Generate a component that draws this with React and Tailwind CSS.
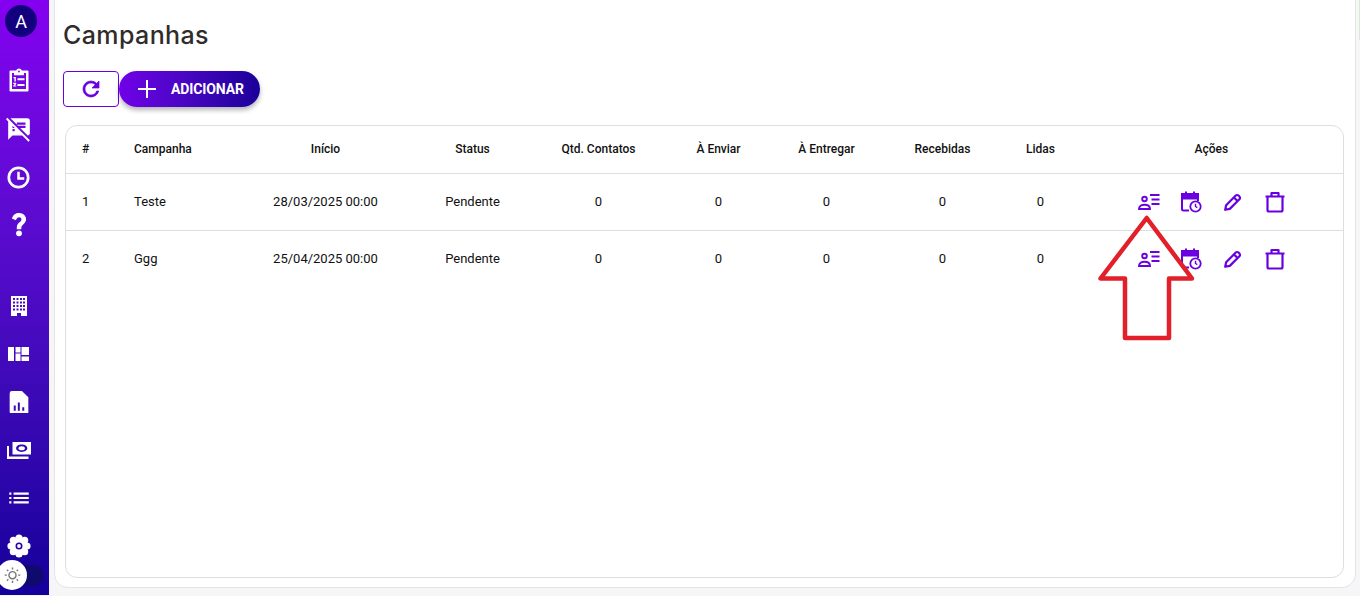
import React from "react";
import { MdSpeakerNotesOff, MdList, MdOutlineWbSunny } from "react-icons/md";

const P = "text-[#6a00e0]";

function ClipNumbered() {
  return (
    <svg viewBox="0 0 24 24" className="w-[24px] h-[24px] -mt-[2px]" fill="currentColor">
      <path fillRule="evenodd" d="M9.200 2.500C9.600 1.300 10.700.5 12 .5s2.400.8 2.800 2H20.500a1 1 0 0 1 1 1V22.500a1 1 0 0 1-1 1H3.500a1 1 0 0 1-1-1V3.500a1 1 0 0 1 1-1h5.700zM5 5v16h14V5h-2v2.200H7V5H5zm7-2.400a.9.9 0 1 0 0 1.800.9.9 0 0 0 0-1.800z" />
      <path d="M6.500 9h2.300v4.500H7.400V10.200H6.500zM10.500 10.200h7v2h-7zM6.300 14.800h2.900v1.200l-1.400 1.400h1.500v1.200H6.300v-1.100l1.500-1.500H6.300zM10.500 16h7v2h-7z" />
    </svg>
  );
}
function Clock() {
  return (
    <svg viewBox="0 0 24 24" className="w-[25px] h-[25px]" fill="none" stroke="currentColor" strokeWidth="2.600">
      <circle cx="12" cy="12" r="9.300" />
      <path d="M12 6.500V13h5.500" strokeWidth="2.400" />
    </svg>
  );
}
function Question() {
  return (
    <svg viewBox="0 0 24 24" className="w-[28px] h-[28px] -mt-[2px]" fill="currentColor" stroke="currentColor" strokeWidth="1">
      <path d="M11.070 12.850c.77-1.390 2.250-2.210 3.110-3.440.91-1.290.4-3.700-2.180-3.700-1.690 0-2.520 1.280-2.870 2.340L6.540 6.960C7.250 4.830 9.180 3 11.990 3c2.350 0 3.960 1.070 4.780 2.410.7 1.150 1.110 3.300.03 4.900-1.200 1.770-2.350 2.310-2.970 3.450-.25.46-.35.76-.35 2.240h-2.890c-.01-.78-.13-2.050.48-3.150zM14 20c0 1.100-.9 2-2 2s-2-.9-2-2 .9-2 2-2 2 .9 2 2z" />
    </svg>
  );
}
function Refresh() {
  return (
    <svg viewBox="0 0 24 24" className="w-[24px] h-[24px]" fill="currentColor" stroke="currentColor" strokeWidth="0.700">
      <path d="M17.650 6.350A7.958 7.958 0 0 0 12 4c-4.420 0-7.990 3.580-7.990 8s3.570 8 7.990 8c3.730 0 6.840-2.550 7.730-6h-2.080A5.990 5.990 0 0 1 12 18c-3.310 0-6-2.690-6-6s2.690-6 6-6c1.660 0 3.140.69 4.220 1.780L13 11h7V4l-2.350 2.350z" />
    </svg>
  );
}
function Building() {
  return (
    <svg viewBox="0 0 16 20" className="w-[16px] h-[20px]" fill="currentColor">
      <path fillRule="evenodd" d="M0 0h16v20H10v-3H6v3H0zM2 2v2h2V2zm3.500 0v2h2V2zm3.500 0v2h2V2zm3 0v2h2V2zM2 5.500v2h2v-2zm3.500 0v2h2v-2zm3.500 0v2h2v-2zm3 0v2h2v-2zM2 9v2h2V9zm3.500 0v2h2V9zm3.500 0v2h2V9zm3 0v2h2V9zM2 12.500v2h2v-2zm3.500 0v2h2v-2zm3.500 0v2h2v-2zm3 0v2h2v-2z" />
    </svg>
  );
}
function Quilt() {
  return (
    <svg viewBox="0 0 21 14" className="w-[21px] h-[14px]" fill="currentColor">
      <path d="M0 0h6v14H0zM7.500 0h5v5.500h-5zM7.500 6.500h5V14h-5zM13.500 0H21v8h-7.500zM13.500 9.500H21V14h-7.500z" />
    </svg>
  );
}
function FileChart() {
  return (
    <svg viewBox="0 0 24 24" className="w-[28px] h-[28px]" fill="currentColor">
      <path fillRule="evenodd" d="M6 2.500h8.500L20 8v13.500H5a1 1 0 0 1-1-1V4.500a2 2 0 0 1 2-2zM7.500 15v4.500h1.700V15zM11 12.500v7h1.700v-7zM14.800 16.500v3h1.700v-3z" />
    </svg>
  );
}
function Money() {
  return (
    <svg viewBox="0 0 24 17" className="w-[24px] h-[17px]" fill="currentColor">
      <path fillRule="evenodd" d="M5.500 0H24v12.500H5.500zM14.700 2.600c-3.100 0-5.600 1.600-5.600 3.650s2.500 3.650 5.600 3.650 5.600-1.600 5.600-3.650-2.500-3.650-5.600-3.650z" />
      <ellipse cx="14.700" cy="6.250" rx="3.200" ry="2" />
      <path d="M0 4h2v10.500h19.500V17H0z" />
    </svg>
  );
}
function Gear() {
  const a = [0, 45, 90, 135, 180, 225, 270, 315];
  return (
    <svg viewBox="0 0 24 24" className="w-[24px] h-[24px]">
      {a.map((d) => (
        <circle key={d} cx={12 + 8 * Math.cos((d * Math.PI) / 180)} cy={12 + 8 * Math.sin((d * Math.PI) / 180)} r="3.600" fill="#fff" />
      ))}
      <circle cx="12" cy="12" r="8" fill="#fff" />
      <circle cx="12" cy="12" r="2.700" fill="none" stroke="#2a00a8" strokeWidth="1.600" />
    </svg>
  );
}
function PersonList() {
  return (
    <svg viewBox="0 0 24 24" className="w-[24px] h-[24px]" fill="none" stroke="currentColor" strokeWidth="1.900">
      <circle cx="7.500" cy="9" r="2.300" />
      <path d="M2 19c0-2.900 2.500-4.300 5.500-4.300S13 16.100 13 19z" />
      <path d="M13 5h9.500M14.500 9.500h8M14.500 14h8" strokeWidth="2.100" />
    </svg>
  );
}
function CalClock() {
  return (
    <svg viewBox="0 0 24 24" className="w-[24px] h-[24px] ml-[1px]" fill="none" stroke="currentColor" strokeWidth="2">
      <path d="M10 20.500H4.500A1.500 1.500 0 0 1 3 19V5.500A1.500 1.500 0 0 1 4.500 4h13A1.500 1.500 0 0 1 19 5.500V11" />
      <path d="M3 4h16v4.500H3z" fill="currentColor" />
      <path d="M7 1.500v3M15 1.500v3" />
      <circle cx="16.500" cy="16.500" r="5.200" strokeWidth="1.800" fill="#fff" />
      <path d="M16.500 13.700v2.800l1.800 1.200" strokeWidth="1.400" />
    </svg>
  );
}
function Pencil() {
  return (
    <svg viewBox="0 0 24 24" className="w-[22px] h-[22px]" fill="none" stroke="currentColor" strokeWidth="2.400" strokeLinejoin="round">
      <path d="M3.500 20.500l1-5L15 5a2.100 2.100 0 0 1 3 0l1 1a2.100 2.100 0 0 1 0 3L8.500 19.500z" />
      <path d="M13 7l4 4" />
    </svg>
  );
}
function Trash() {
  return (
    <svg viewBox="0 0 24 24" className="w-[24px] h-[24px]" fill="none" stroke="currentColor" strokeWidth="2.200" strokeLinejoin="round">
      <path d="M2.500 6.500h19M8.500 6.500V3h7v3.500" />
      <path d="M4.500 6.500V20A1.500 1.500 0 0 0 6 21.500h12a1.500 1.500 0 0 0 1.500-1.500V6.500" />
    </svg>
  );
}

const top = [
  <ClipNumbered />,
  <MdSpeakerNotesOff size={26} />,
  <Clock />,
  <Question />,
];
const bottom = [
  <Building />,
  <Quilt />,
  <FileChart />,
  <Money />,
  <MdList size={26} />,
  <Gear />,
];

const grid = "grid grid-cols-[52.5px_117px_180px_114px_138px_102px_114px_118px_78px_263.5px] items-center";
const head = ["Início", "Status", "Qtd. Contatos", "À Enviar", "À Entregar", "Recebidas", "Lidas", "Ações"];
const rows = [
  ["1", "Teste", "28/03/2025 00:00"],
  ["2", "Ggg", "25/04/2025 00:00"],
];

function NavItem({ children }) {
  return <div className="h-[48px] w-[37px] flex items-center justify-center text-white">{children}</div>;
}

export default function App() {
  return (
    <div className="relative h-[596px] w-[1360px] overflow-hidden flex bg-[#f6f5f7] font-['Roboto',sans-serif]">
      <aside className="relative w-[49px] h-[595px] shrink-0 flex flex-col bg-gradient-to-b from-[#8400f0] to-[#14009a]">
        <div className="h-[57px] pt-[5px] pl-[5px]">
          <div className="w-[32px] h-[32px] rounded-full bg-[#12007e] flex items-center justify-center text-white text-[18px]">A</div>
        </div>
        {top.map((icon, i) => <NavItem key={i}>{icon}</NavItem>)}
        <div className="h-[33px]" />
        {bottom.map((icon, i) => <NavItem key={i}>{icon}</NavItem>)}
        <div className="absolute left-[12px] top-[565px] w-[32px] h-[21px] rounded-full bg-[#110a6e]" />
        <div className="absolute left-[-3px] top-[560px] w-[30px] h-[30px] rounded-full bg-white flex items-center justify-center text-[#777]">
          <MdOutlineWbSunny size={17} />
        </div>
      </aside>

      <main className="ml-[5px] w-[1302px] h-[589px] -mt-px bg-white border border-[#e4e4e4] rounded-b-[14px] pl-[8px] pr-[10px] flex flex-col">
        <h1 className="mt-[17px] h-[36px] leading-[36px] text-[25px] font-medium text-[#2f2c2b] font-['Inter',sans-serif] tracking-[0.4px]">Campanhas</h1>
        <div className="mt-[18px] flex h-[36px]">
          <button className={`w-[56px] h-[36px] border border-[#6a00e0] rounded-[4px] flex items-center justify-center ${P}`}>
            <Refresh />
          </button>
          <button className="w-[141px] h-[36px] rounded-full bg-gradient-to-r from-[#7000e8] to-[#1a0099] text-white flex items-center pl-[18px] shadow-[0_3px_5px_rgba(0,0,0,0.3)]">
            <svg viewBox="0 0 20 20" className="w-[20px] h-[20px]" stroke="currentColor" strokeWidth="2"><path d="M10 1v18M1 10h18" /></svg>
            <span className="ml-[14px] text-[14px] font-bold tracking-[-0.12px]">ADICIONAR</span>
          </button>
        </div>
        <div className="mt-[18px] ml-[2px] w-[1279px] h-[453px] border border-[#dedede] rounded-[12px]">
          <div className={`${grid} h-[48px] pb-[1px] border-b border-[#dedede] text-[12px] font-medium text-[#111]`}>
            <div className="pl-[16px]">#</div>
            <div className="pl-[15.5px]">Campanha</div>
            {head.map((h) => <div key={h} className="text-center">{h}</div>)}
          </div>
          {rows.map((r, i) => (
            <div key={r[0]} className={`${grid} text-[13px] text-[#111] ${i === 0 ? "h-[57px] border-b border-[#dedede]" : "h-[56px]"}`}>
              <div className="pl-[16px]">{r[0]}</div>
              <div className="pl-[15.5px]">{r[1]}</div>
              <div className="text-center">{r[2]}</div>
              <div className="text-center">Pendente</div>
              {[0, 1, 2, 3, 4].map((k) => <div key={k} className="text-center">0</div>)}
              <div className={`flex justify-center items-center pl-[1px] ${P}`}>
                <span className="w-[42px] flex justify-center"><PersonList /></span>
                <span className="w-[42px] flex justify-center"><CalClock /></span>
                <span className="w-[42px] flex justify-center"><Pencil /></span>
                <span className="w-[42px] flex justify-center"><Trash /></span>
              </div>
            </div>
          ))}
        </div>
      </main>

      <div className="absolute right-0 top-0 w-[1px] h-[40px] bg-[#d5ecd0]" />

      <svg className="absolute left-[1095px] top-[212px] w-[104px] h-[132px]" viewBox="1095 212 104 132" fill="none" stroke="#e2202a" strokeWidth="4.500" strokeLinejoin="round">
        <path d="M1146.700 218L1100.500 278.500H1125V338H1169V278.500H1192z" />
      </svg>
    </div>
  );
}
